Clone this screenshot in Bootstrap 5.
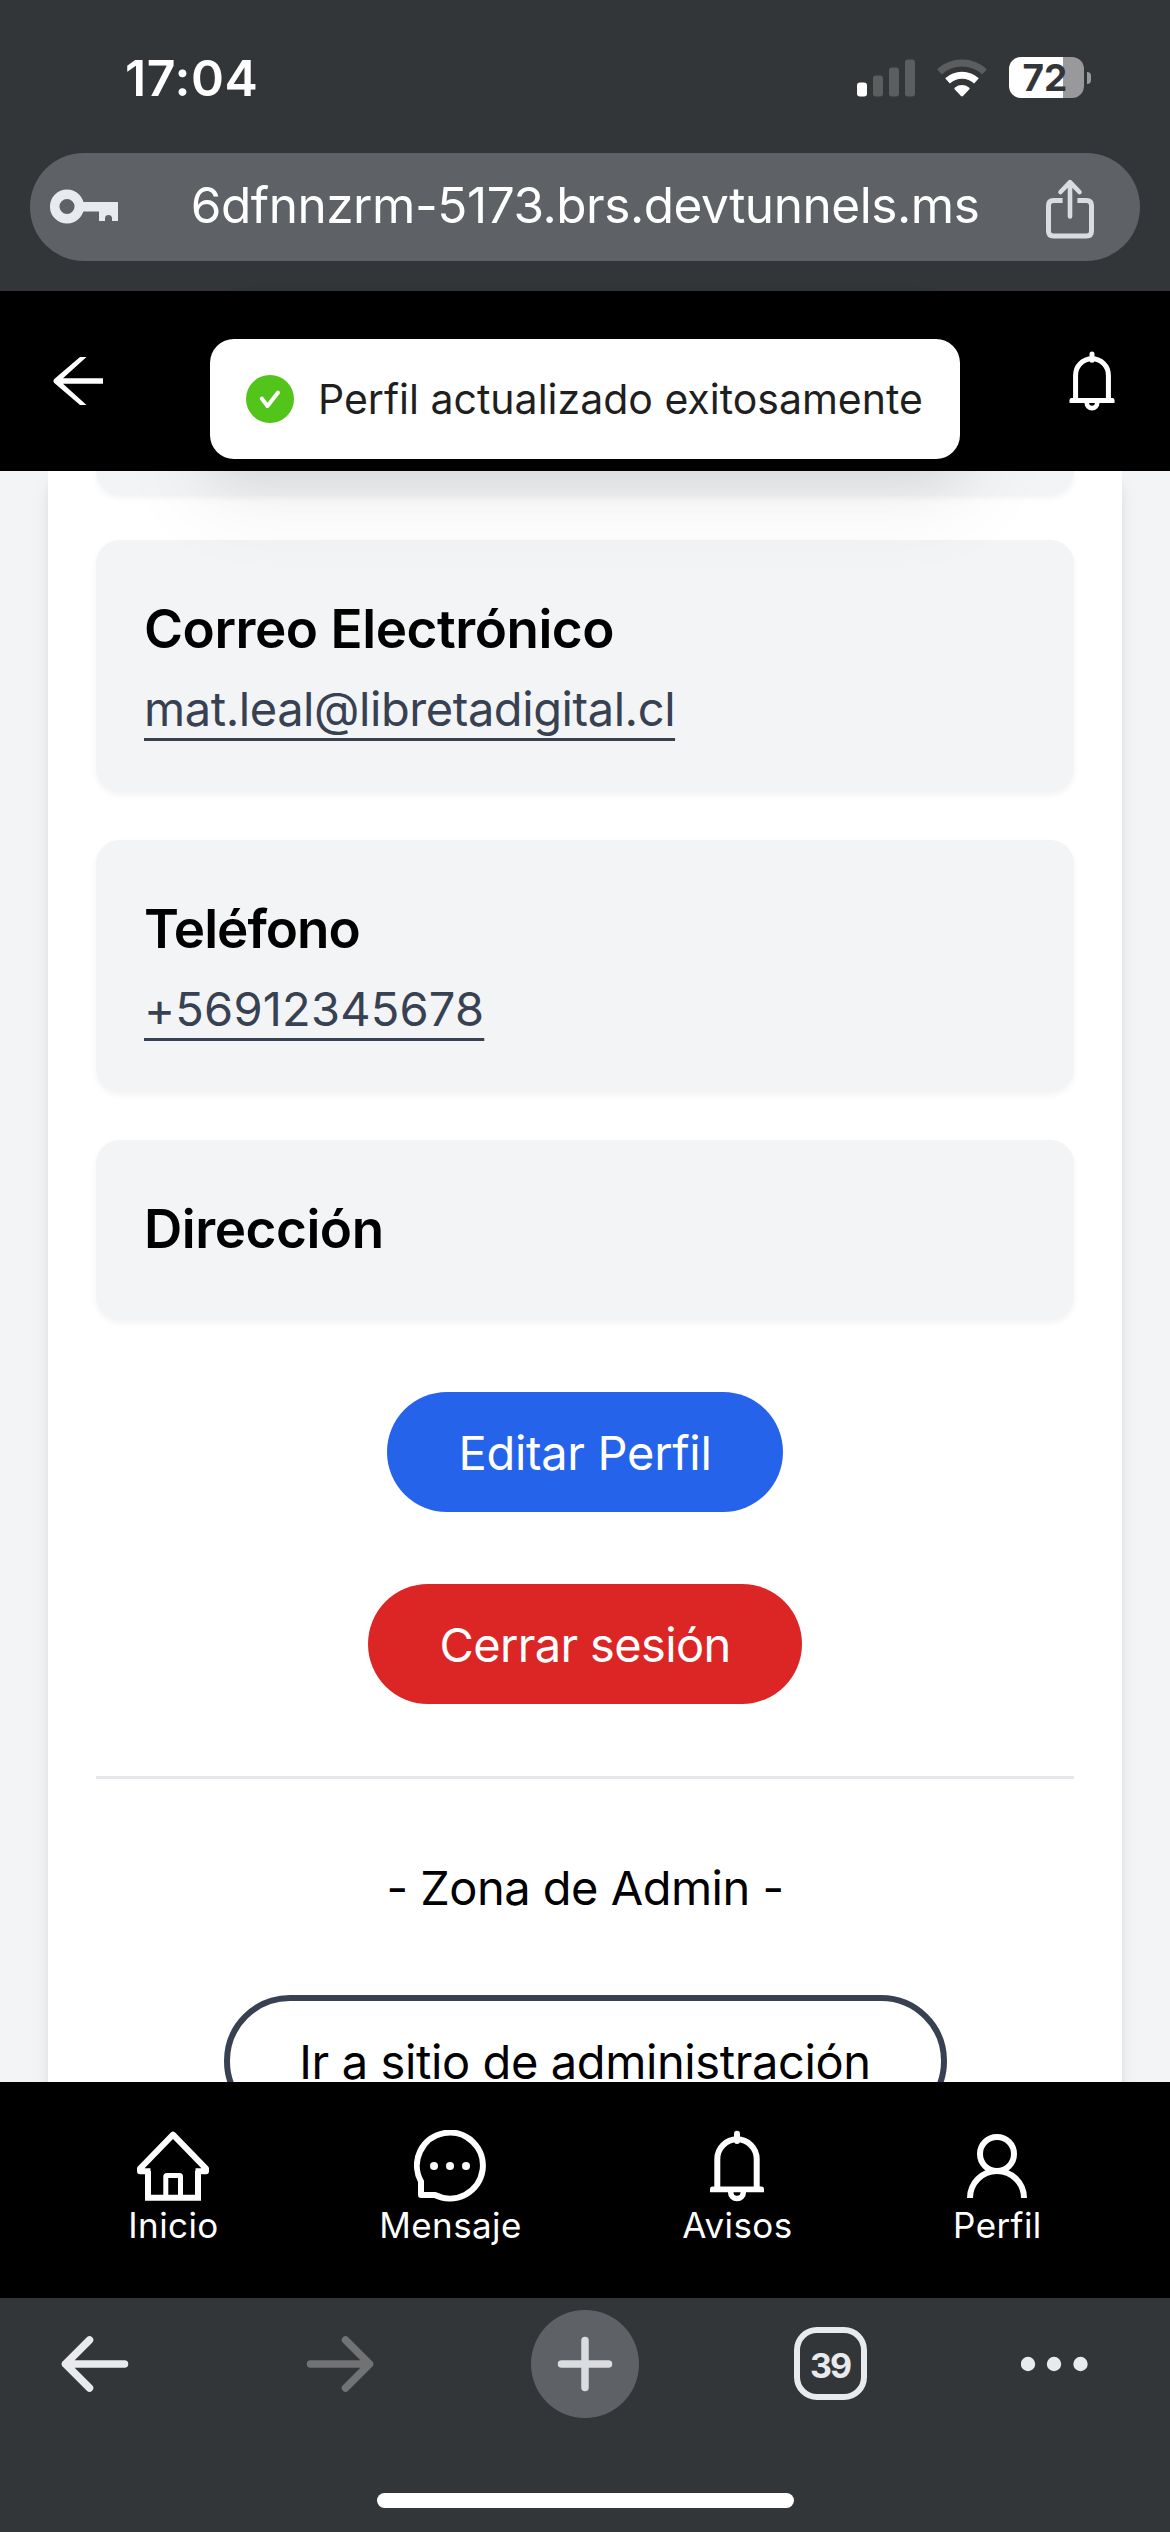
<!DOCTYPE html>
<html lang="es">
<head>
<meta charset="utf-8">
<meta name="viewport" content="width=device-width, initial-scale=1">
<title>Perfil</title>
<link href="https://cdn.jsdelivr.net/npm/bootstrap@5.3.0/dist/css/bootstrap.min.css" rel="stylesheet">
<style>
  body { font-family: Inter, "Liberation Sans", sans-serif; background: #333639; color: #000; }
  svg { display: block; flex: none; }
  .screen { width: 1170px; height: 2532px; }
  .chrome { background: #333639; flex: none; }

  /* phone status bar */
  .status-bar { height: 153px; padding: 2px 79px 0 125px; }
  .clock { font-size: 50px; font-weight: 600; line-height: 1; letter-spacing: .6px; }
  .status-icons { gap: 22px; }
  .battery { width: 75px; height: 41px; border-radius: 12px; padding-right: 3px; color: #333639; font-size: 37px; font-weight: 700; line-height: 1; background: linear-gradient(90deg, #fff 54px, #99999b 54px); }
  .battery-nub { width: 4px; height: 12px; border-radius: 0 6px 6px 0; background: #99999b; margin-left: 3px; }

  /* address bar */
  .address { height: 108px; margin: 0 30px 30px; padding: 0 46px 0 20px; background: #5e6266; }
  .address-url { font-size: 49.5px; line-height: 104px; letter-spacing: -.45px; padding: 0 0 4px 6px; }

  /* app header */
  .app-header { height: 180px; padding: 0 48px; z-index: 2; flex: none; }
  .notice { top: 48px; left: 210px; width: 750px; height: 120px; padding: 0 36px; gap: 24px; border-radius: 24px; color: #1f1f1f; font-size: 41px; line-height: 1; white-space: nowrap;
    box-shadow: 0 18px 48px rgba(0,0,0,.08), 0 9px 18px -12px rgba(0,0,0,.12), 0 27px 84px 24px rgba(0,0,0,.05); }

  /* profile */
  .page { height: 1611px; background: #f3f4f6; padding: 0 48px; flex: none; }
  .sheet { height: 1800px; padding: 0 48px; box-shadow: 0 12px 18px -3px rgba(0,0,0,.1), 0 6px 12px -6px rgba(0,0,0,.1); }
  .info { background: #f3f4f6; border-radius: 24px; padding: 48px; margin-bottom: 48px; box-shadow: 0 3px 6px rgba(0,0,0,.05); }
  .info-cut { padding: 0; height: 24px; margin-bottom: 45px; border-radius: 0 0 24px 24px; }
  .info h2 { font-size: 53px; font-weight: 600; line-height: 82px; margin: 0 0 2px; letter-spacing: -.45px; }
  .info h2.tel-title { letter-spacing: -1px; }
  .info a { display: block; color: #374151; font-size: 47px; line-height: 74px; margin-bottom: -2px; letter-spacing: -.43px; text-decoration: underline; text-decoration-thickness: 3px; text-underline-offset: 12px; text-decoration-skip-ink: none; }
  .info a.tel { letter-spacing: .2px; }
  .action { height: 120px; padding: 0; border: 0; color: #fff; font-size: 47px; line-height: 1; }
  .action-edit { width: 396px; background: #2563eb; letter-spacing: -.31px; margin: 24px 0 72px; }
  .action-exit { width: 434px; background: #dc2626; letter-spacing: -.65px; }
  .rule { border-top: 3px solid #e5e7eb; margin: 72px 0; opacity: 1; }
  .zone { font-size: 47px; line-height: 74px; letter-spacing: -.5px; margin: 0 0 70px; }
  .action-admin { width: 723px; height: 132px; border: 6px solid #374151; color: #000; letter-spacing: -.39px; }

  /* app tabs */
  .app-tabs { height: 216px; padding: 48px 48px 0; flex: none; }
  .app-tabs a { font-size: 35px; line-height: 47px; letter-spacing: .4px; }

  /* browser toolbar */
  .tools { height: 131px; padding: 0 41px; }
  .tool { width: 108px; height: 108px; }
  .tool-plus { background: #5e6266; }
  .tab-count { width: 73px; height: 73px; border: 6.5px solid #e8eaed; border-radius: 23px; color: #e8eaed; font-size: 34px; font-weight: 700; line-height: 1; letter-spacing: -2px; padding-top: 4px; }
  .home-bar { width: 417px; height: 15px; margin: 64px auto 0; }
</style>
<script src="https://cdn.jsdelivr.net/npm/bootstrap@5.3.0/dist/js/bootstrap.bundle.min.js"></script>
</head>
<body>
<svg width="0" height="0" class="position-absolute" aria-hidden="true">
  <symbol id="bell" viewBox="0 0 72 72">
    <g fill="none" stroke="#fff" stroke-width="6">
      <path d="M36 11V3.7" stroke-linecap="round"/>
      <path d="M16.3 58V29a19.7 19.7 0 0 1 39.4 0v29"/>
      <path d="M29.7 61v1.2a6.3 6.3 0 0 0 12.6 0V61" stroke-width="5.6"/>
    </g>
    <path fill="#fff" d="M9 59q0-2.5 2.5-2.5h49Q63 56.5 63 59v3.3H9z"/>
  </symbol>
</svg>

<div class="screen d-flex flex-column overflow-hidden">
  <header class="chrome text-white">
    <div class="status-bar d-flex align-items-center justify-content-between">
      <span class="clock">17:04</span>
      <div class="status-icons d-flex align-items-center">
        <svg width="58" height="38" viewBox="0 0 58 38">
          <rect x="0" y="23.5" width="10" height="14" rx="3" fill="#fff"/>
          <g fill="#5c5d5f"><rect x="16" y="16.5" width="10" height="21" rx="3"/><rect x="32" y="8.5" width="10" height="29" rx="3"/><rect x="48" y=".5" width="10" height="37" rx="3"/></g>
        </svg>
        <svg width="50" height="38" viewBox="0 0 50 38" fill="none" stroke-width="7">
          <path d="M2.5 12.8a33.5 33.5 0 0 1 45 0" stroke="#5c5d5f"/>
          <path d="M10.5 21.8a21.5 21.5 0 0 1 29 0" stroke="#fff"/>
          <path d="M24 37L17.6 30.3q-.7-1 .4-1.800a11.5 11.5 0 0 1 14 0q1.100.8.4 1.800L26 37q-1 .9-2 0z" fill="#fff"/>
        </svg>
        <div class="d-flex align-items-center">
          <span class="battery d-flex align-items-center justify-content-center">72</span>
          <span class="battery-nub"></span>
        </div>
      </div>
    </div>
    <div class="address rounded-pill d-flex align-items-center justify-content-between">
      <svg width="68" height="36" viewBox="0 0 68 36">
        <circle cx="17" cy="17.5" r="12.3" fill="none" stroke="#e8eaed" stroke-width="9.5"/>
        <path fill="#e8eaed" d="M32 13h36v19h-6v-2.5a3.5 3.5 0 0 0-7 0V32h-6v-9.5H32z"/>
      </svg>
      <span class="address-url">6dfnnzrm-5173.brs.devtunnels.ms</span>
      <svg width="48" height="58" viewBox="0 0 48 58" fill="none" stroke="#dadce0" stroke-width="5" stroke-linecap="round" stroke-linejoin="round" overflow="visible">
        <path d="M16.6 22.500H7.500q-5 0-5 5v25.500q0 5 5 5h33q5 0 5-5V27.500q0-5-5-5h-9.100" stroke-linecap="butt"/>
        <path d="M24 38.500V5.500M14.500 14L24 4.200 33.500 14" stroke-width="4.600"/>
      </svg>
    </div>
  </header>

  <nav class="app-header bg-black position-relative d-flex align-items-center justify-content-between">
    <svg width="60" height="60" viewBox="0 0 60 60"><path fill="#fff" d="M32 6h6.500L15 27.300h40v5.400H15L38.500 54H32L6 31.700Q4.700 30 6 28.300z"/></svg>
    <svg width="60" height="60"><use href="#bell"/></svg>
    <div class="notice position-absolute bg-white d-flex align-items-center" role="alert">
      <svg width="48" height="48" viewBox="0 0 48 48"><circle cx="24" cy="24" r="24" fill="#52c41a"/><path d="M15.800 23.500l5.700 7.500L32 17.500" fill="none" stroke="#fff" stroke-width="4" stroke-linecap="round" stroke-linejoin="round"/></svg>
      <span>Perfil actualizado exitosamente</span>
    </div>
  </nav>

  <main class="page overflow-hidden">
    <div class="sheet bg-white">
      <div class="info info-cut"></div>
      <section class="info"><h2>Correo Electrónico</h2><a href="#">mat.leal@libretadigital.cl</a></section>
      <section class="info"><h2 class="tel-title">Teléfono</h2><a class="tel" href="#">+56912345678</a></section>
      <section class="info"><h2>Dirección</h2></section>
      <div class="d-flex flex-column align-items-center">
        <button class="btn rounded-pill action action-edit">Editar Perfil</button>
        <button class="btn rounded-pill action action-exit">Cerrar sesión</button>
      </div>
      <hr class="rule">
      <p class="zone text-center">- Zona de Admin -</p>
      <div class="text-center"><button class="btn rounded-pill action action-admin">Ir a sitio de administración</button></div>
    </div>
  </main>

  <nav class="app-tabs bg-black d-flex justify-content-around align-items-start">
    <a class="d-flex flex-column align-items-center text-white text-decoration-none" href="#">
      <svg width="72" height="72" viewBox="0 0 72 72" fill="none" stroke="#fff" stroke-width="6">
        <path d="M11 41v26.700h50V41"/>
        <path d="M13.500 41.300H3v-2.700L36 4.600l33 34v2.700H58.500" stroke-linejoin="round"/>
        <path d="M28.800 66V46.500q0-1 1-1h12.700q1 0 1 1V66" stroke-width="5"/>
      </svg>Inicio</a>
    <a class="d-flex flex-column align-items-center text-white text-decoration-none" href="#">
      <svg width="72" height="72" viewBox="0 0 72 72">
        <path d="M7 65V51.500A33 33 0 1 1 21 65z" fill="none" stroke="#fff" stroke-width="6" stroke-linejoin="round"/>
        <g fill="#fff"><circle cx="20" cy="36" r="4"/><circle cx="36" cy="36" r="4"/><circle cx="52" cy="36" r="4"/></g>
      </svg>Mensaje</a>
    <a class="d-flex flex-column align-items-center text-white text-decoration-none" href="#">
      <svg width="72" height="72"><use href="#bell"/></svg>Avisos</a>
    <a class="d-flex flex-column align-items-center text-white text-decoration-none" href="#">
      <svg width="72" height="72" viewBox="0 0 72 72" fill="none" stroke="#fff" stroke-width="6">
        <circle cx="36" cy="24" r="17"/><path d="M9 68a27 27 0 0 1 54 0"/>
      </svg>Perfil</a>
  </nav>

  <footer class="chrome flex-grow-1">
    <div class="tools d-flex align-items-center justify-content-between">
      <span class="tool d-flex align-items-center justify-content-center">
        <svg width="68" height="56" viewBox="0 0 68 56" fill="none" stroke="#e8eaed" stroke-width="7.500" stroke-linecap="round" stroke-linejoin="round"><path d="M63.500 28H4.500M28.500 4L4.500 28l24 24"/></svg>
      </span>
      <span class="tool d-flex align-items-center justify-content-center">
        <svg width="68" height="56" viewBox="0 0 68 56" fill="none" stroke="#717274" stroke-width="7.500" stroke-linecap="round" stroke-linejoin="round"><path d="M4.500 28h59M39.500 4l24 24-24 24"/></svg>
      </span>
      <span class="tool tool-plus rounded-circle d-flex align-items-center justify-content-center">
        <svg width="56" height="56" viewBox="0 0 56 56" stroke="#dadce0" stroke-width="7.500" stroke-linecap="round"><path d="M28 4.500v47M4.500 28h47"/></svg>
      </span>
      <span class="tool d-flex align-items-center justify-content-center">
        <span class="tab-count d-flex align-items-center justify-content-center">39</span>
      </span>
      <span class="tool d-flex align-items-center">
        <svg width="68" height="16" viewBox="0 0 68 16" fill="#e8eaed"><circle cx="7" cy="8" r="7.200"/><circle cx="33" cy="8" r="7.200"/><circle cx="59.500" cy="8" r="7.200"/></svg>
      </span>
    </div>
    <div class="home-bar bg-white rounded-pill"></div>
  </footer>
</div>
</body>
</html>
